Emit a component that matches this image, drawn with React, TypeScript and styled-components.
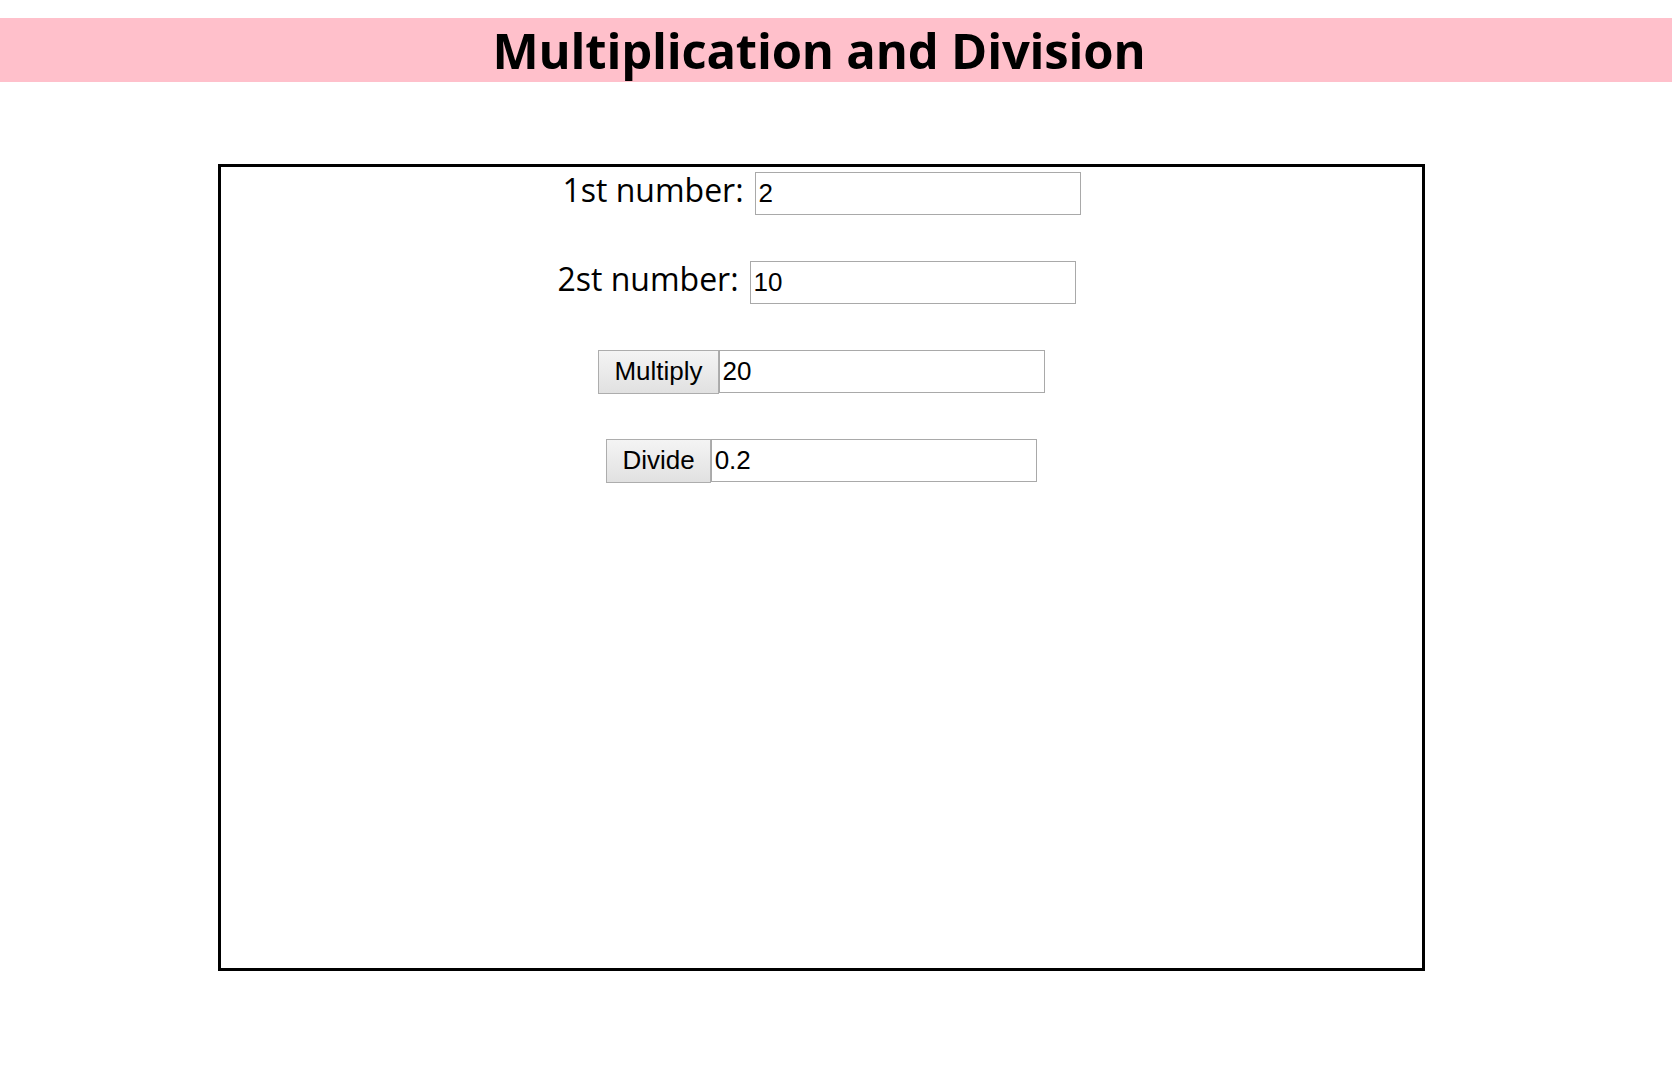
import React, { useState } from "react";
import styled, { createGlobalStyle } from "styled-components";

const Global = createGlobalStyle`
  html, body { margin: 0; padding: 0; background: #fff; }
  body { font-family: "Open Sans", "Noto Sans", sans-serif; color: #000; }
`;

const Page = styled.div`
  display: flex;
  flex-direction: column;
  padding-top: 18px;
  padding-bottom: 104px;
`;

const TitleBar = styled.h1`
  margin: 0;
  height: 64px;
  background: pink;
  font-family: "Open Sans", "Noto Sans", sans-serif;
  font-weight: 700;
  font-size: 49px;
  line-height: 64px;
  text-align: center;
  padding-right: 34px;
  letter-spacing: -0.2px;
`;

const Panel = styled.div`
  box-sizing: border-box;
  margin: 82px 0 0 218px;
  width: 1207px;
  height: 807px;
  border: 3px solid #000;
  padding-top: 5px;
  display: flex;
  flex-direction: column;
  gap: 46px;
`;

const Row = styled.div<{ $extraRight?: number }>`
  display: flex;
  justify-content: center;
  align-items: center;
  height: 43px;
  padding-right: ${(p) => p.$extraRight ?? 0}px;
`;

const Label = styled.label`
  font-family: "Open Sans", "Noto Sans", sans-serif;
  font-size: 32px;
  line-height: 43px;
  margin-right: 11px;
  margin-top: -8px;
`;

const Field = styled.input`
  box-sizing: border-box;
  width: 326px;
  height: 43px;
  margin: 0;
  padding: 0 3px 1px;
  border: 1px solid #a9a9a9;
  font-family: "Liberation Sans", Arial, sans-serif;
  font-size: 26px;
  color: #000;
  background: #fff;
  outline: none;
`;

const ActionButton = styled.button`
  box-sizing: border-box;
  height: 44px;
  margin: 0;
  padding: 0 15px 1px;
  border: 1px solid #adadad;
  border-radius: 0;
  background: linear-gradient(#f4f4f4, #e1e1e1);
  font-family: "Liberation Sans", Arial, sans-serif;
  font-size: 26px;
  color: #000;
  cursor: pointer;
`;

export default function App() {
  const [a, setA] = useState("2");
  const [b, setB] = useState("10");
  const [prod, setProd] = useState("20");
  const [quot, setQuot] = useState("0.2");

  return (
    <Page>
      <Global />
      <TitleBar>Multiplication and Division</TitleBar>
      <Panel>
        <Row>
          <Label>1st number:</Label>
          <Field value={a} onChange={(e) => setA(e.target.value)} />
        </Row>
        <Row $extraRight={10}>
          <Label>2st number:</Label>
          <Field value={b} onChange={(e) => setB(e.target.value)} />
        </Row>
        <Row>
          <ActionButton onClick={() => setProd(String(Number(a) * Number(b)))}>
            Multiply
          </ActionButton>
          <Field value={prod} readOnly />
        </Row>
        <Row>
          <ActionButton onClick={() => setQuot(String(Number(a) / Number(b)))}>
            Divide
          </ActionButton>
          <Field value={quot} readOnly />
        </Row>
      </Panel>
    </Page>
  );
}
